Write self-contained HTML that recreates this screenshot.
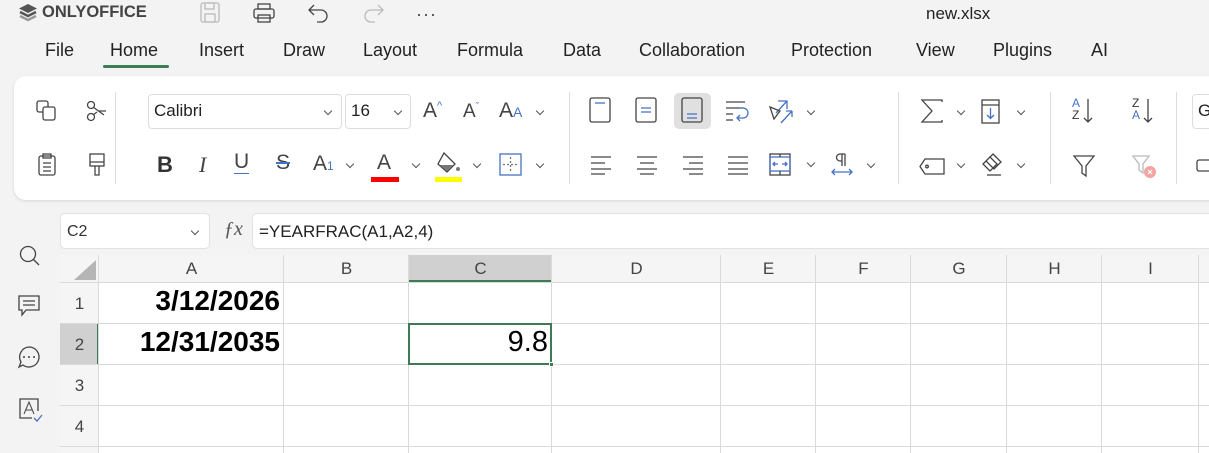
<!DOCTYPE html>
<html><head><meta charset="utf-8"><style>
*{box-sizing:border-box;margin:0;padding:0}
body{width:1209px;height:453px;overflow:hidden;background:#f3f3f3;font-family:"Liberation Sans",sans-serif;position:relative;color:#333}
.a{position:absolute}
.tab{position:absolute;top:40px;font-size:18px;color:#222}
svg{position:absolute;overflow:visible}
.ic{fill:none;stroke:#444;stroke-width:1.3}
.bl{stroke:#4472c4}
.chev{position:absolute;width:6px;height:6px;border-right:1.3px solid #555;border-bottom:1.3px solid #555;transform:rotate(45deg)}
.vs{position:absolute;width:1px;background:#ddd}
.hdr{position:absolute;font-size:17px;color:#444;text-align:center}
</style></head><body>
<svg style="left:18px;top:3px" width="20" height="20" viewBox="0 0 20 20"><path d="M10 1 L19 5.5 L10 10 L1 5.5Z" fill="#555"/><path d="M2 9 L10 13 L18 9" stroke="#555" stroke-width="2.4" fill="none"/><path d="M2 13 L10 17 L18 13" stroke="#999" stroke-width="2.4" fill="none"/></svg>
<div class="a" style="left:42px;top:3px;font-size:16.5px;font-weight:bold;color:#444">ONLYOFFICE</div>
<svg style="left:200px;top:2px" width="20" height="20"><rect x="1" y="1" width="18" height="19" rx="2" class="ic" style="stroke:#bbb"/><rect x="5" y="1" width="9" height="6" class="ic" style="stroke:#bbb"/><rect x="5" y="12" width="10" height="8" class="ic" style="stroke:#bbb"/></svg>
<svg style="left:253px;top:3px" width="22" height="20"><rect x="5" y="1" width="12" height="5" class="ic"/><rect x="1" y="6" width="20" height="9" rx="2" class="ic"/><rect x="5" y="12" width="12" height="7" class="ic"/></svg>
<svg style="left:308px;top:3px" width="22" height="20"><path d="M6 2 L1 7 L6 12 M1 7 H13 A6 6 0 0 1 13 19 H9" class="ic"/></svg>
<svg style="left:362px;top:3px" width="22" height="20"><path d="M16 2 L21 7 L16 12 M21 7 H9 A6 6 0 0 0 9 19 H13" class="ic" style="stroke:#bbb"/></svg>
<div class="a" style="left:416px;top:4px;font-size:18px;color:#444;letter-spacing:1px">···</div>
<div class="a" style="left:926px;top:4px;font-size:17px;color:#222">new.xlsx</div>
<div class="tab" style="left:45px">File</div>
<div class="tab" style="left:110px">Home</div>
<div class="a" style="left:103px;top:65px;width:66px;height:3px;border-radius:2px;background:#3d7d55"></div>
<div class="tab" style="left:199px">Insert</div>
<div class="tab" style="left:283px">Draw</div>
<div class="tab" style="left:363px">Layout</div>
<div class="tab" style="left:457px">Formula</div>
<div class="tab" style="left:563px">Data</div>
<div class="tab" style="left:639px">Collaboration</div>
<div class="tab" style="left:791px">Protection</div>
<div class="tab" style="left:916px">View</div>
<div class="tab" style="left:993px">Plugins</div>
<div class="tab" style="left:1091px">AI</div>
<div class="a" style="left:14px;top:76px;width:1210px;height:124px;background:#fff;border-radius:12px;box-shadow:0 1px 3px rgba(0,0,0,.12)"></div>
<svg style="left:36px;top:100px" width="22" height="22"><rect x="1" y="1" width="11" height="11" rx="2" class="ic"/><rect x="7" y="7" width="12" height="13" rx="2" class="ic" style="fill:#fff"/></svg>
<svg style="left:86px;top:100px" width="22" height="22"><circle cx="5" cy="5" r="3.5" class="ic"/><circle cx="5" cy="17" r="3.5" class="ic"/><path d="M7 7 L18 15 M7 15 L11 12 M13 11 H20" class="ic"/></svg>
<svg style="left:38px;top:153px" width="20" height="24"><rect x="1" y="3" width="16" height="19" rx="2" class="ic"/><rect x="5" y="1" width="8" height="4" class="ic"/><path d="M5 10H13M5 14H13M5 18H13" class="ic"/></svg>
<svg style="left:88px;top:153px" width="20" height="26"><rect x="2" y="1" width="14" height="12" class="ic"/><path d="M2 9H16 M7 13V22 H11 V13" class="ic"/></svg>
<div class="vs" style="left:115px;top:92px;height:92px"></div>
<div class="a" style="left:148px;top:94px;width:194px;height:35px;border:1px solid #ddd;border-radius:4px;font-size:17px;padding:6px 5px;color:#222">Calibri</div>
<div class="chev" style="left:325px;top:108px"></div>
<div class="a" style="left:345px;top:94px;width:66px;height:35px;border:1px solid #ddd;border-radius:4px;font-size:17px;padding:6px 5px;color:#222">16</div>
<div class="chev" style="left:395px;top:108px"></div>
<div class="a" style="left:423px;top:99px;font-size:21px;color:#444">A<sup style="font-size:11px;color:#4472c4">^</sup></div>
<div class="a" style="left:463px;top:101px;font-size:19px;color:#444">A<sup style="font-size:10px;color:#4472c4">ˇ</sup></div>
<div class="a" style="left:499px;top:99px;font-size:21px;color:#444">A<span style="font-size:14px;color:#4472c4">A</span></div>
<div class="chev" style="left:537px;top:108px"></div>
<div class="a" style="left:157px;top:152px;font-size:22px;font-weight:bold;color:#333">B</div>
<div class="a" style="left:199px;top:152px;font-size:22px;font-style:italic;color:#444;font-family:'Liberation Serif',serif">I</div>
<div class="a" style="left:234px;top:151px;font-size:21px;color:#444;border-bottom:1.5px solid #4472c4;line-height:22px">U</div>
<div class="a" style="left:276px;top:151px;font-size:21px;color:#444;text-decoration:line-through;text-decoration-color:#4472c4">S</div>
<div class="a" style="left:313px;top:152px;font-size:21px;color:#444">A<span style="font-size:12px;color:#4472c4">1</span></div>
<div class="chev" style="left:347px;top:161px"></div>
<div class="a" style="left:377px;top:151px;font-size:21px;color:#444">A</div>
<div class="a" style="left:371px;top:177px;width:28px;height:5px;background:#f00"></div>
<div class="chev" style="left:413px;top:161px"></div>
<svg style="left:436px;top:152px" width="26" height="24"><path d="M8 1 L19 12 L11 20 L2 12 Z" class="ic"/><path d="M4 13 L17 13 L11 19 Z" fill="#777"/><circle cx="22" cy="17" r="2" fill="#777"/></svg>
<div class="a" style="left:435px;top:177px;width:27px;height:5px;background:#ff0"></div>
<div class="chev" style="left:474px;top:161px"></div>
<svg style="left:499px;top:153px" width="24" height="24"><rect x="1" y="1" width="21" height="21" class="ic bl"/><path d="M11.5 4V19 M4 11.5H19" class="ic" stroke-dasharray="2 2" style="stroke:#777"/></svg>
<div class="chev" style="left:537px;top:161px"></div>
<div class="vs" style="left:569px;top:92px;height:92px"></div>
<svg style="left:589px;top:97px" width="24" height="28"><rect x="1" y="1" width="20" height="24" rx="2" class="ic"/><path d="M6 6H16" class="ic bl"/></svg>
<svg style="left:635px;top:97px" width="24" height="28"><rect x="1" y="1" width="20" height="24" rx="2" class="ic"/><path d="M6 11H16 M6 15H16" class="ic bl"/></svg>
<div class="a" style="left:674px;top:93px;width:37px;height:36px;background:#e0e0e0;border-radius:5px"></div>
<svg style="left:681px;top:97px" width="24" height="28"><rect x="1" y="1" width="20" height="24" rx="2" class="ic"/><path d="M6 17H16 M6 21H16" class="ic bl"/></svg>
<svg style="left:725px;top:100px" width="28" height="24"><path d="M1 2H20 M1 8H18 M1 14H8 M1 20H8" class="ic"/><path d="M14 8H18 A5 5 0 0 1 18 18 H12 M15 15 L12 18 L15 21" class="ic bl"/></svg>
<svg style="left:768px;top:99px" width="24" height="26"><path d="M10 2H19V10 M19 2 L8 14 M13 24 L24 12 M24 12 H18 M24 12 V18" class="ic bl"/><path d="M2 8 L12 12 L6 20Z" class="ic"/></svg>
<div class="chev" style="left:808px;top:108px"></div>
<svg style="left:590px;top:155px" width="22" height="20"><path d="M1 2H21M1 8H15M1 14H21M1 19H15" class="ic"/></svg>
<svg style="left:636px;top:155px" width="22" height="20"><path d="M1 2H21M4 8H18M1 14H21M4 19H18" class="ic"/></svg>
<svg style="left:682px;top:155px" width="22" height="20"><path d="M1 2H21M7 8H21M1 14H21M7 19H21" class="ic"/></svg>
<svg style="left:727px;top:155px" width="22" height="20"><path d="M1 2H21M1 8H21M1 14H21M1 19H21" class="ic"/></svg>
<svg style="left:769px;top:153px" width="22" height="24"><rect x="1" y="1" width="20" height="21" class="ic"/><rect x="1" y="4" width="20" height="14" class="ic bl"/><path d="M11 1V4 M11 18V22" class="ic"/><path d="M4 11H9 M6 9L4 11L6 13 M13 11H18 M16 9L18 11L16 13" class="ic bl"/></svg>
<div class="chev" style="left:808px;top:160px"></div>
<svg style="left:830px;top:152px" width="24" height="26"><path d="M12 2V14 M15 2V14 M15 2H10 A3.5 3.5 0 0 0 10 9H12" class="ic"/><path d="M2 20H22 M5 17L2 20L5 23 M19 17L22 20L19 23" class="ic bl"/></svg>
<div class="chev" style="left:868px;top:161px"></div>
<div class="vs" style="left:898px;top:92px;height:92px"></div>
<svg style="left:921px;top:99px" width="22" height="24"><path d="M21 3V1H1L11 12L1 23H21V21" class="ic"/></svg>
<div class="chev" style="left:958px;top:108px"></div>
<svg style="left:981px;top:99px" width="20" height="26"><rect x="1" y="1" width="17" height="23" class="ic"/><path d="M1 6H18" class="ic"/><path d="M9.5 9V19 M6 16L9.5 19.5L13 16" class="ic bl"/></svg>
<div class="chev" style="left:1018px;top:108px"></div>
<svg style="left:919px;top:157px" width="28" height="20"><path d="M6 2H25V17H6L1 9.5Z" class="ic"/><circle cx="8" cy="9.5" r="1.3" class="ic"/></svg>
<div class="chev" style="left:958px;top:161px"></div>
<svg style="left:980px;top:154px" width="26" height="24"><path d="M10 3 L3 10 L10 17 L17 10 Z M13 0 L21 8 L14 15 L6 7 Z" class="ic"/><path d="M7 21H21" class="ic"/></svg>
<div class="chev" style="left:1018px;top:161px"></div>
<div class="vs" style="left:1050px;top:92px;height:92px"></div>
<div class="a" style="left:1072px;top:97px;font-size:12px;line-height:12px;color:#4472c4">A<br><span style="color:#333">Z</span></div>
<svg style="left:1084px;top:99px" width="10" height="26"><path d="M4 0V23 M0 19L4 23L8 19" class="ic"/></svg>
<div class="a" style="left:1132px;top:97px;font-size:12px;line-height:12px;color:#333">Z<br><span style="color:#4472c4">A</span></div>
<svg style="left:1144px;top:99px" width="10" height="26"><path d="M4 0V23 M0 19L4 23L8 19" class="ic"/></svg>
<svg style="left:1073px;top:155px" width="22" height="22"><path d="M1 1H21L13 11V21L9 18V11Z" class="ic"/></svg>
<svg style="left:1132px;top:155px" width="28" height="26"><path d="M1 1H17L11 9V18L7 15V9Z" class="ic" style="stroke:#bbb"/><circle cx="18" cy="17" r="6" fill="#f4a3a3"/><path d="M16 15L20 19M20 15L16 19" stroke="#fff" stroke-width="1.2"/></svg>
<div class="vs" style="left:1176px;top:92px;height:92px"></div>
<div class="a" style="left:1192px;top:94px;width:30px;height:35px;border:1px solid #ddd;border-radius:4px;font-size:17px;padding:6px 5px;color:#222">G</div>
<svg style="left:1196px;top:159px" width="14" height="14"><rect x="1" y="1" width="16" height="11" rx="2" class="ic"/></svg>
<svg style="left:19px;top:245px" width="24" height="24"><circle cx="9" cy="9" r="7.5" class="ic"/><path d="M14.5 14.5L20 20" class="ic"/></svg>
<svg style="left:18px;top:295px" width="24" height="26"><path d="M1 1H21V15H8L4 20V15H1Z" class="ic"/><path d="M5 6H17M5 10H17" class="ic"/></svg>
<svg style="left:18px;top:346px" width="24" height="24"><path d="M11 1A10 10 0 1 1 5 19L1 21L3 16A10 10 0 0 1 11 1Z" class="ic"/><circle cx="6" cy="11" r="1" fill="#444"/><circle cx="11" cy="11" r="1" fill="#444"/><circle cx="16" cy="11" r="1" fill="#444"/></svg>
<svg style="left:19px;top:398px" width="24" height="26"><path d="M13 20H1V1H19V13" class="ic"/><path d="M5 16L10 4L15 16M7 12H13" class="ic" style="stroke-width:1"/><path d="M15 20L18 23L23 17" class="ic bl"/></svg>
<div class="a" style="left:60px;top:213px;width:150px;height:36px;background:#fff;border:1px solid #e2e2e2;border-radius:5px;font-size:16px;padding:9px 6px;color:#333">C2</div>
<div class="chev" style="left:192px;top:228px"></div>
<div class="a" style="left:224px;top:218px;font-size:20px;font-style:italic;color:#555;font-family:'Liberation Serif',serif">ƒx</div>
<div class="a" style="left:252px;top:213px;width:970px;height:36px;background:#fff;border:1px solid #e2e2e2;border-radius:5px 0 0 5px;font-size:17px;padding:8px 6px;color:#222">=YEARFRAC(A1,A2,4)</div>
<div class="a" style="left:60px;top:255px;width:1149px;height:198px;background:#fff"></div>
<div class="a" style="left:60px;top:255px;width:1149px;height:28px;background:#f5f5f5;border-bottom:1px solid #d4d4d4"></div>
<div class="a" style="left:60px;top:255px;width:39px;height:198px;background:#f5f5f5;border-right:1px solid #d4d4d4"></div>
<svg style="left:66px;top:260px" width="30" height="20"><path d="M30 0V20H8Z" fill="#b5b5b5"/></svg>
<div class="a" style="left:409px;top:255px;width:143px;height:27px;background:#d0d0d0;border-bottom:2px solid #3d7a55"></div>
<div class="a" style="left:60px;top:324px;width:39px;height:41px;background:#d0d0d0;border-right:2px solid #3d7a55"></div>
<div id="g"></div>
<script>
var cols=[99,284,409,552,721,816,911,1007,1102,1199],names="ABCDEFGHI",h="";
for(var i=0;i<cols.length;i++){h+='<div class="a" style="left:'+(cols[i]-1)+'px;top:255px;width:1px;height:198px;background:#dadada"></div>';
if(i<9)h+='<div class="hdr" style="left:'+cols[i]+'px;top:259px;width:'+(cols[i+1]-cols[i])+'px">'+names[i]+'</div>';}
var rows=[283,324,365,406,447];
for(var j=0;j<rows.length;j++){h+='<div class="a" style="left:60px;top:'+(rows[j]-1)+'px;width:1149px;height:1px;background:#dadada"></div>';
if(j<4)h+='<div class="hdr" style="left:60px;top:'+(rows[j]+11)+'px;width:39px">'+(j+1)+'</div>';}
document.getElementById('g').innerHTML=h;
</script>
<div class="a" style="left:99px;top:285px;width:181px;text-align:right;font-size:28px;font-weight:bold;color:#000">3/12/2026</div>
<div class="a" style="left:99px;top:326px;width:181px;text-align:right;font-size:28px;font-weight:bold;color:#000">12/31/2035</div>
<div class="a" style="left:408px;top:323px;width:144px;height:42px;border:2px solid #3d7a55"></div>
<div class="a" style="left:549px;top:362px;width:5px;height:5px;background:#3d7a55;border:1px solid #fff"></div>
<div class="a" style="left:409px;top:326px;width:139px;text-align:right;font-size:29px;color:#000">9.8</div>
</body></html>
